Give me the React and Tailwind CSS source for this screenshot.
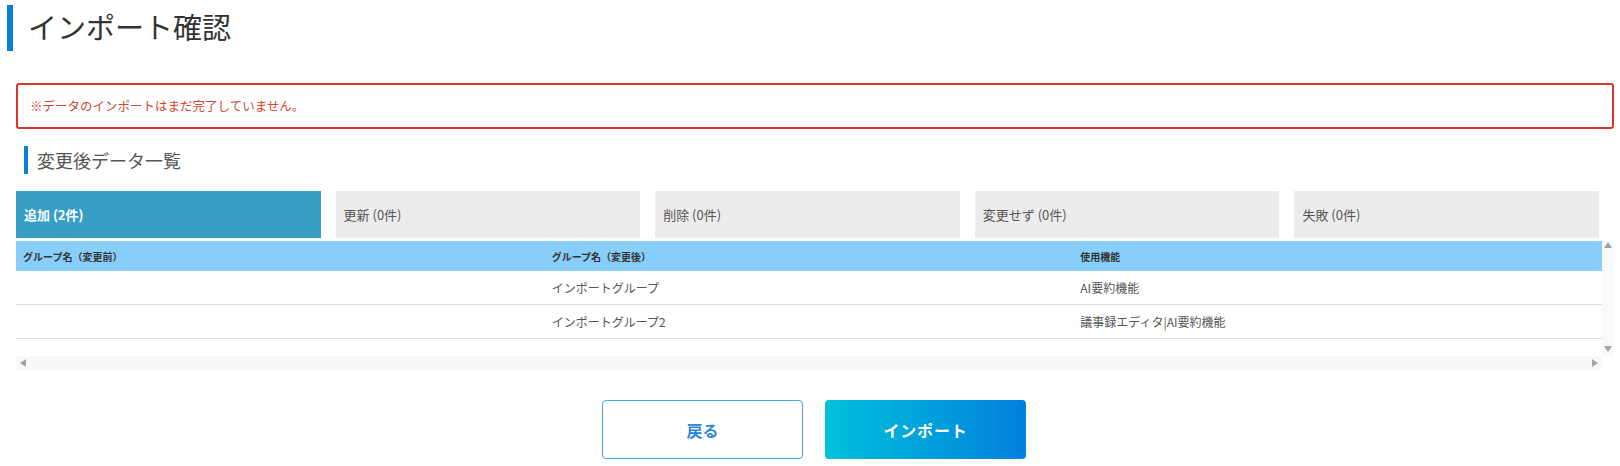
import React from "react";

const tabs = [
  { label: "追加 (2件)", active: true },
  { label: "更新 (0件)" },
  { label: "削除 (0件)" },
  { label: "変更せず (0件)" },
  { label: "失敗 (0件)" },
];

const rows = [
  { before: "", after: "インポートグループ", features: "AI要約機能" },
  { before: "", after: "インポートグループ2", features: "議事録エディタ|AI要約機能" },
];

function Arrow({ dir }) {
  const pts = {
    up: "0,6 4,0 8,6",
    down: "0,0 8,0 4,6",
    left: "6,0 6,8 0,4",
    right: "0,0 0,8 6,4",
  }[dir];
  const vertical = dir === "up" || dir === "down";
  return (
    <svg width={vertical ? 8 : 6} height={vertical ? 6 : 8} viewBox={vertical ? "0 0 8 6" : "0 0 6 8"}>
      <polygon points={pts} fill="#a3a3a3" />
    </svg>
  );
}

export default function App() {
  return (
    <div
      className="w-full bg-white"
      style={{ fontFamily: '"Noto Sans CJK JP", "Noto Sans", sans-serif' }}
    >
      {/* page title */}
      <div className="flex items-center pl-[7px] pt-[5px]">
        <div className="w-[6px] h-[46px] bg-[#0a7fd6]" />
        <h1 className="ml-[15px] -mt-[3px] text-[29px] leading-none text-[#333]">インポート確認</h1>
      </div>

      {/* alert */}
      <div className="mt-[32px] ml-4 mr-[6px] h-[46px] flex items-center px-[12px] border-2 border-[#d9372a] rounded-[3px]">
        <span className="text-[12.5px] text-[#d4452f]">※データのインポートはまだ完了していません。</span>
      </div>

      {/* section header */}
      <div className="mt-[17px] ml-[24px] flex items-center">
        <div className="w-1 h-[28px] bg-[#0a7fd6]" />
        <h2 className="ml-[9px] text-[18px] leading-none text-[#555]">変更後データ一覧</h2>
      </div>

      {/* tabs */}
      <div className="mt-[17px] ml-4 w-[1583px] flex gap-[15px]">
        {tabs.map((t) => (
          <div
            key={t.label}
            className={`flex-1 h-[47px] flex items-center px-2 text-[13px] ${
              t.active ? "bg-[#379fc5] text-white font-bold" : "bg-[#ececec] text-[#555]"
            }`}
          >
            {t.label}
          </div>
        ))}
      </div>

      {/* table with scrollbars */}
      <div className="mt-[3px] ml-4 mr-[6px] flex flex-col">
        <div className="flex">
          <div className="flex-1 h-[115px]">
            <div className="grid grid-cols-3 h-[30px] items-center bg-[#87cefa] text-[10px] font-bold text-[#333]">
              <div className="pl-[7px]">グループ名（変更前）</div>
              <div className="pl-[7px]">グループ名（変更後）</div>
              <div className="pl-[7px]">使用機能</div>
            </div>
            {rows.map((r) => (
              <div
                key={r.after}
                className="grid grid-cols-3 h-[34px] items-center border-b border-[#dddddd] text-[12px] text-[#555]"
              >
                <div className="pl-[7px]">{r.before}</div>
                <div className="pl-[7px]">{r.after}</div>
                <div className="pl-[7px]">{r.features}</div>
              </div>
            ))}
          </div>
          <div className="w-[12px] bg-[#f9f9f9] flex flex-col items-center justify-between pt-[1px] pb-[4px]">
            <Arrow dir="up" />
            <Arrow dir="down" />
          </div>
        </div>
        <div className="flex">
          <div className="flex-1 h-[14px] bg-[#f8f8f8] flex items-center justify-between pl-[4px] pr-[4px]">
            <Arrow dir="left" />
            <Arrow dir="right" />
          </div>
          <div className="w-[12px] h-[14px] bg-white" />
        </div>
      </div>

      {/* buttons */}
      <div className="mt-[30px] pl-[8px] flex justify-center gap-[22px] pb-[8px]">
        <button className="w-[201px] h-[59px] rounded-[4px] border border-[#4ea3e6] bg-white text-[16px] font-bold text-[#2b87d8]">
          戻る
        </button>
        <button className="w-[201px] h-[59px] rounded-[4px] bg-gradient-to-r from-[#00c1da] to-[#0080dc] text-[16px] font-bold tracking-wider text-white">
          インポート
        </button>
      </div>
    </div>
  );
}
